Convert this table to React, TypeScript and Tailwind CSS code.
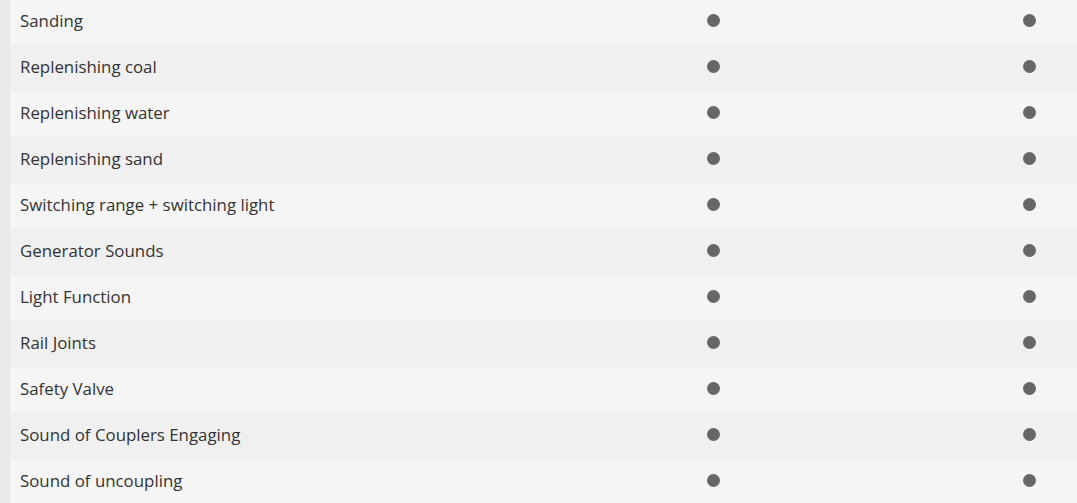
const rows = [
  "Sanding",
  "Replenishing coal",
  "Replenishing water",
  "Replenishing sand",
  "Switching range + switching light",
  "Generator Sounds",
  "Light Function",
  "Rail Joints",
  "Safety Valve",
  "Sound of Couplers Engaging",
  "Sound of uncoupling",
];

function Dot() {
  return <span className="block w-[13px] h-[13px] rounded-full bg-[#666666]" />;
}

export default function App() {
  return (
    <div className="w-[1077px] h-[503px] overflow-hidden bg-[#e9e9e9] pl-[10px] font-['Open_Sans',sans-serif] text-[16.85px] text-[#333333]">
      <div className="-mt-px w-[1177px]">
        {rows.map((label, i) => (
          <div
            key={label}
            className={`grid grid-cols-[545px_316px_316px] h-[46px] pb-[3px] items-center ${
              i % 2 === 0 ? "bg-[#f5f5f5]" : "bg-[#f0f0f0]"
            }`}
          >
            <div className="pl-[10px] leading-[24px]">{label}</div>
            <div className="flex justify-center">
              <Dot />
            </div>
            <div className="flex justify-center">
              <Dot />
            </div>
          </div>
        ))}
      </div>
    </div>
  );
}
